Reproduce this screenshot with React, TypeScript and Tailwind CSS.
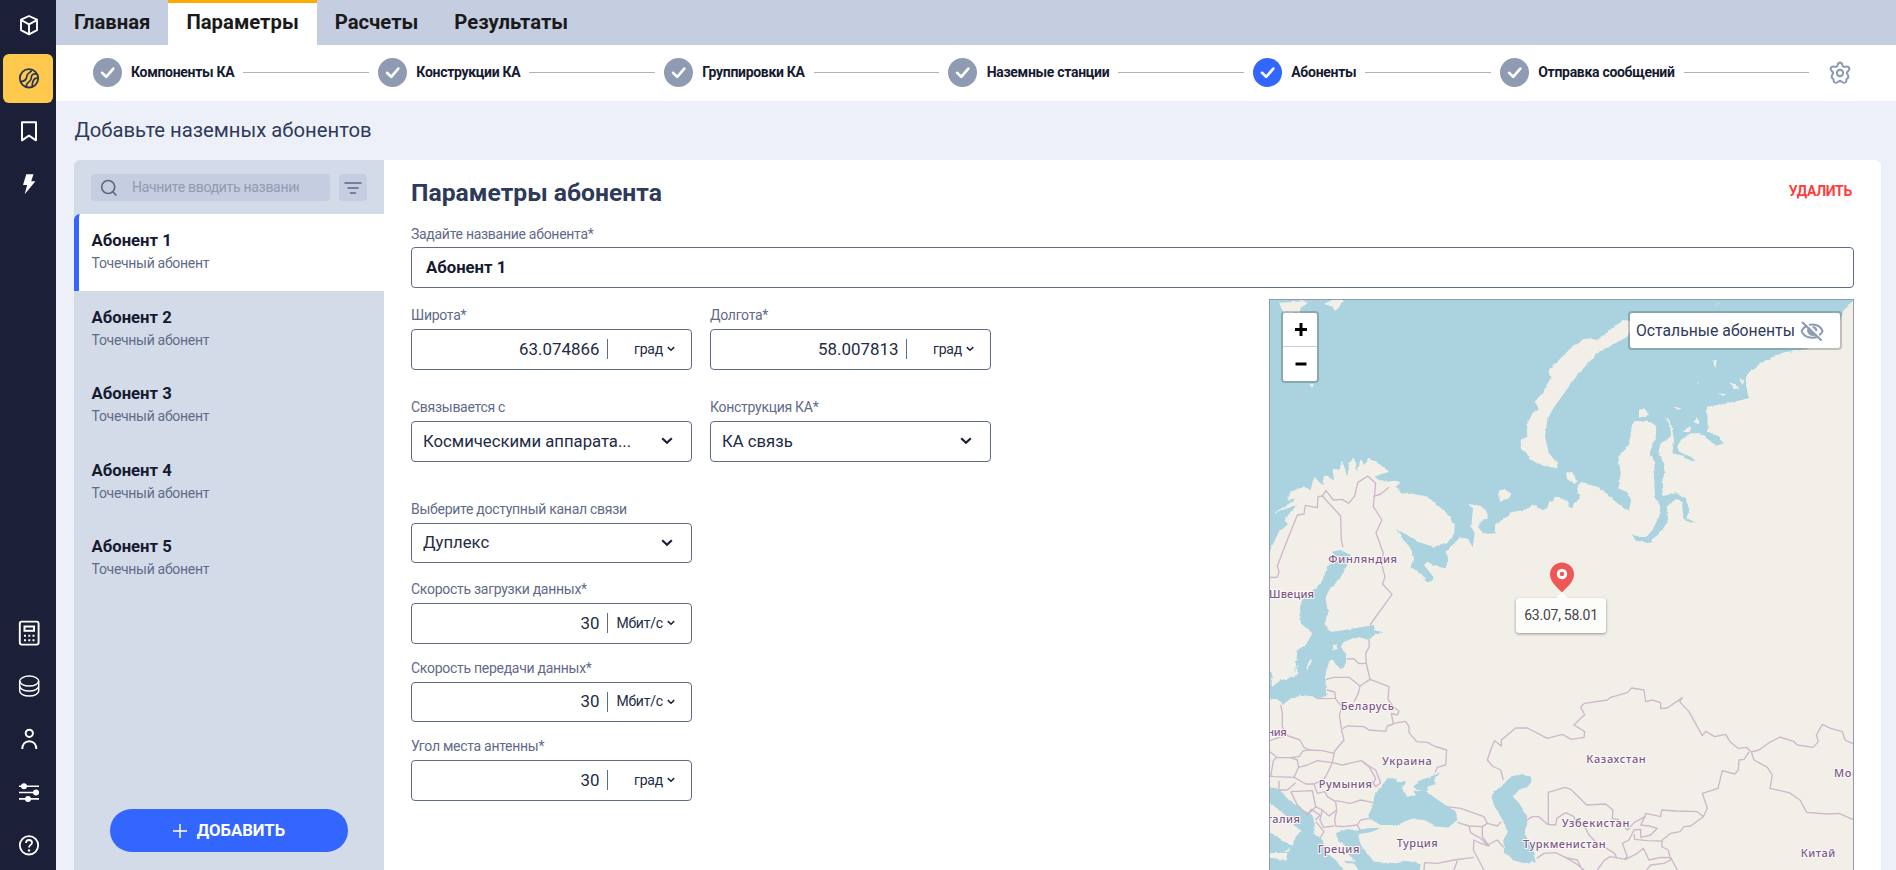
import React from "react";

type IconProps = { children: React.ReactNode; className?: string };

function NavIcon({ children, className = "text-white" }: IconProps) {
  return (
    <svg viewBox="-1 0.7 30 30" className={"h-[30px] w-[30px] " + className} fill="none" stroke="currentColor" strokeWidth="1.8">
      {children}
    </svg>
  );
}

function NavButton({ active, children }: { active?: boolean; children: React.ReactNode }) {
  return (
    <button
      className={
        active
          ? "flex h-[49px] w-[50px] items-center justify-center rounded-md bg-[#ffc94d]"
          : "flex h-[49px] w-[50px] items-center justify-center"
      }
    >
      <NavIcon className={active ? "text-[#2b3654]" : "text-white"}>{children}</NavIcon>
    </button>
  );
}

function Sidebar() {
  return (
    <nav className="flex h-full w-14 shrink-0 flex-col items-center justify-between bg-[#1b1f38] pt-px">
      <div className="flex flex-col gap-1">
        <NavButton>
          <path d="M15 5.7 23 9.400v10.400l-8 4.200-8-4.200V9.400zM7.300 9.800 15 14l7.700-4.200M15 14v9.600" strokeWidth="1.9" strokeLinejoin="round" />
        </NavButton>
        <NavButton active>
          <circle cx="15" cy="15" r="9.200" />
          <path d="M17.700 6.200c0 3.200-4.400 3-4.700 6.200-.3 3.700-2.700 6.100-6.900 5.900M12 23.700c.3-3 1.500-4.300 3.500-5.600 2.500-1.700 1.300-4.300 2.300-5.900.9-1.400 2.900-2 4.700-1.400M18.300 23.400c-.5-2.400.2-3.900.9-5.800.7-2 2.400-3 4.600-2.800" strokeWidth="1.700" />
        </NavButton>
        <NavButton>
          <path d="M8 6h14v18l-7-4.600-7 4.600z" strokeWidth="2" strokeLinejoin="round" />
        </NavButton>
        <NavButton>
          <path d="M12.300 5h7.200l-2.300 7h4.200L10.700 25l2.400-9.200H9z" fill="currentColor" stroke="none" />
        </NavButton>
      </div>
      <div className="flex flex-col gap-1">
        <NavButton>
          <rect x="5.800" y="3.300" width="18.800" height="23" rx="2" strokeWidth="1.900" />
          <rect x="10.500" y="8.200" width="9.500" height="4.300" strokeWidth="2" />
          <path d="M10 17.500h2m2.300 0h2m2.200 0h2M10 22h2m2.300 0h2m2.200 0h2" strokeWidth="2" />
        </NavButton>
        <NavButton>
          <ellipse cx="15.200" cy="9.800" rx="9.500" ry="5" strokeWidth="1.500" />
          <path d="M5.700 9.800v10c0 2.800 4.300 5 9.500 5s9.500-2.200 9.500-5v-10M5.700 14.800c0 2.800 4.300 5 9.500 5s9.500-2.200 9.500-5" strokeWidth="1.500" />
        </NavButton>
        <NavButton>
          <circle cx="15.300" cy="9" r="3.600" strokeWidth="2" />
          <path d="M8.300 24.800c0-4.500 2.700-7.800 7-7.800s7 3.300 7 7.800" strokeWidth="2" />
        </NavButton>
        <NavButton>
          <path d="M5 9h20M5 15.200h20M5 21.600h20" strokeWidth="1.600" />
          <g fill="currentColor" stroke="none">
            <circle cx="10" cy="9" r="3" />
            <circle cx="22" cy="15.200" r="3" />
            <circle cx="14" cy="21.600" r="3" />
          </g>
        </NavButton>
        <NavButton>
          <circle cx="15" cy="15" r="9.200" />
          <path d="M12 12.600c0-1.800 1.300-2.900 3-2.900s3 1.100 3 2.700c0 2.200-3 2.200-3 4.900" />
          <circle cx="15" cy="20.200" r="1.200" fill="currentColor" stroke="none" />
        </NavButton>
      </div>
    </nav>
  );
}

const tabs = ["Главная", "Параметры", "Расчеты", "Результаты"];

function Tabs() {
  return (
    <div className="flex h-[45px] shrink-0 bg-[#c5cde0]">
      {tabs.map((t) => (
        <button
          key={t}
          className={
            t === "Параметры"
              ? "border-t-[3px] border-[#ffaa00] bg-white px-[18px] pb-1 text-[20.300px] leading-[36px] font-bold text-[#1a1a1a]"
              : "border-t-[3px] border-transparent px-[18px] pb-1 text-[20.300px] leading-[36px] font-bold text-[#1a1a1a]"
          }
        >
          {t}
        </button>
      ))}
    </div>
  );
}

const steps = ["Компоненты КА", "Конструкции КА", "Группировки КА", "Наземные станции", "Абоненты", "Отправка сообщений"];

function Stepper() {
  return (
    <div className="flex h-14 shrink-0 items-center bg-white pr-[43px] pl-[36.500px]">
      <div className="flex flex-1 items-center gap-[9px] pb-px">
        {steps.map((s) => (
          <React.Fragment key={s}>
            <div className="flex items-center gap-[9.500px]">
              <svg viewBox="0 0 32 32" className="h-[29px] w-[29px]">
                <circle cx="16" cy="16" r="16" fill={s === "Абоненты" ? "#3366ff" : "#8f9bb3"} />
                <path d="m10 16.300 4.600 4.600 7.800-9.200" fill="none" stroke="#fff" strokeWidth="2.900" strokeLinecap="round" strokeLinejoin="round" />
              </svg>
              <span className="text-[14px] font-bold tracking-[-0.3px] whitespace-nowrap text-[#151a30]">{s}</span>
            </div>
            <div className="h-px flex-1 bg-[#b3b3b3]" />
          </React.Fragment>
        ))}
      </div>
      <svg viewBox="0 0 24 24" className="ml-[18px] h-[26px] w-[26px]" fill="none" stroke="#8f9bb3" strokeWidth="1.900" strokeLinejoin="round">
        <circle cx="12" cy="12" r="2.900" />
        <path d="M9.700 5c.3-1.600 1-2.600 2.300-2.600s2 1 2.300 2.600c.2 1 1.100 1.600 2.100 1.300 1.600-.5 3.300-.5 4 .9.600 1.300 0 2.300-1.200 3.300-.9.700-1 1.700-.4 2.600 1 1.400 1.200 2.800.3 3.700-.500.500-.8.600-1.100 1-.3.600.1 1.500-.4 2.300-.8 1.200-2.300 1.200-3.400.4l-1-.8c-.7-.5-1.700-.5-2.400 0l-1 .8c-1.100.8-2.600.8-3.400-.4-.5-.8-.1-1.700-.4-2.300-.3-.4-.6-.5-1.100-1-.9-.9-.7-2.300.3-3.700.6-.9.500-1.900-.4-2.600-1.200-1-1.800-2-1.200-3.300.7-1.400 2.400-1.400 4-.9 1 .3 1.900-.3 2.100-1.300z" />
      </svg>
    </div>
  );
}

function SubscriberList() {
  return (
    <aside className="flex w-[310px] shrink-0 flex-col rounded-tl-md bg-[#d4dbe8]">
      <div className="flex h-[54px] shrink-0 gap-[9px] pt-[14px] pl-[17px]">
        <div className="flex h-[27px] w-[239px] items-center rounded-[4px] bg-[#c5cde0] pl-[9px]">
          <svg viewBox="0 0 18 18" className="h-[18px] w-[18px] shrink-0" fill="none" stroke="#5a6785" strokeWidth="1.600">
            <circle cx="8.200" cy="8" r="6.500" />
            <path d="m12.800 12.800 3.700 3.700" />
          </svg>
          <span className="ml-[14px] w-[167px] overflow-hidden text-[14px] tracking-[-0.3px] whitespace-nowrap text-[#8f9bb3]">
            Начните вводить название
          </span>
        </div>
        <button className="flex h-[27px] w-7 items-center justify-center rounded-[4px] bg-[#c5cde0]">
          <svg viewBox="0 0 18 14" className="h-[14px] w-[18px]" stroke="#5a6785" strokeWidth="1.500" strokeLinecap="round">
            <path d="M1 2h16M4 7h10M6.500 12h5" />
          </svg>
        </button>
      </div>
      {[1, 2, 3, 4, 5].map((n) => (
        <div
          key={n}
          className={
            n === 1
              ? "h-[76.500px] shrink-0 rounded-tl-md border-l-[5px] border-[#3366ff] bg-white pt-4 pl-[12.500px]"
              : "h-[76.500px] shrink-0 pt-4 pl-[17.500px]"
          }
        >
          <div className="text-[16.700px] leading-[22px] font-bold text-[#151a30]">Абонент {n}</div>
          <div className="mt-px text-[14px] leading-[20px] tracking-[-0.3px] text-[#5f6b88]">Точечный абонент</div>
        </div>
      ))}
      <button className="mt-auto mb-[18px] ml-9 flex h-[43px] w-[238px] items-center justify-center gap-[10px] rounded-full bg-[#3366ff] text-[16.700px] font-bold text-white">
        <svg viewBox="0 0 14 14" className="h-[14px] w-[14px]" stroke="#fff" strokeWidth="1.500">
          <path d="M7 0v14M0 7h14" />
        </svg>
        ДОБАВИТЬ
      </button>
    </aside>
  );
}

function Label({ children }: { children: React.ReactNode }) {
  return <div className="h-[20px] text-[14px] leading-[22px] tracking-[-0.28px] whitespace-nowrap text-[#5f6b88]">{children}</div>;
}

function Chevron({ big }: { big?: boolean }) {
  return (
    <svg viewBox="0 0 12 8" className={big ? "h-2 w-3" : "h-[6px] w-[8px]"} fill="none" stroke="#1b2138" strokeWidth="2.200">
      <path d="m1.200 1.200 4.800 4.600 4.800-4.600" />
    </svg>
  );
}

function NumberField({ label, value, unit }: { label: string; value: string; unit: string }) {
  return (
    <div className="w-[281px]">
      <Label>{label}</Label>
      <div className="mt-[5px] flex h-[40.500px] items-center rounded-[4px] border border-[#5f6b88] pr-4">
        <span className="flex-1 text-right text-[16.900px] text-[#222b45]">{value}</span>
        <span className="ml-[7px] h-5 w-px bg-[#5f6b88]" />
        <span className="flex w-[67.500px] items-center justify-end gap-1 text-[14px] tracking-[-0.2px] text-[#222b45]">
          {unit}
          <Chevron />
        </span>
      </div>
    </div>
  );
}

function SelectField({ label, value }: { label: string; value: string }) {
  return (
    <div className="w-[281px]">
      <Label>{label}</Label>
      <div className="mt-[5px] flex h-[40.500px] items-center justify-between rounded-[4px] border border-[#5f6b88] pr-[18px] pl-[11px]">
        <span className="text-[16.700px] whitespace-nowrap text-[#222b45]">{value}</span>
        <Chevron big />
      </div>
    </div>
  );
}

const sea = [
  // Arctic ocean with the White, Barents and Kara seas
  "M0 0H1790V10L1767 32 1740 60 1733 70 1722 125 1690 150 1650 172 1600 182 1560 187 1520 205 1490 220 1465 240 1450 250 1445 270 1453 325 1420 333 1380 342 1328 350 1330 380 1332 425 1360 437 1380 462 1355 467 1335 450 1310 430 1280 430 1250 450 1240 470 1245 485 1280 500 1295 513 1280 512 1260 498 1225 490 1230 450 1225 420 1220 395 1206 380 1215 400 1219 440 1190 460 1183 487 1200 520 1202 545 1193 575 1197 618 1235 610 1265 625 1276 660 1267 685 1295 697 1270 697 1258 685 1254 635 1240 628 1220 637 1207 655 1213 690 1198 715 1165 750 1165 760 1115 752 1103 732 1125 742 1150 738 1165 720 1185 680 1190 650 1173 625 1170 560 1172 515 1158 485 1175 440 1177 408 1160 397 1122 393 1105 400 1095 460 1063 500 1070 550 1063 595 1085 605 1103 630 1092 662 1060 640 1030 612 1000 590 950 578 938 590 948 625 930 640 925 655 913 650 915 635 890 625 870 622 868 634 855 635 850 655 835 660 810 645 780 660 745 665 715 690 697 700 695 730 660 732 641 710 650 690 675 685 665 660 650 648 612 642 627 655 622 710 632 730 626 772 612 748 590 740 570 760 545 785 553 805 545 835 520 830 490 815 480 825 508 860 505 875 485 872 470 850 440 830 450 800 440 775 415 745 397 718 430 735 460 755 510 770 545 762 570 735 572 705 560 680 520 645 490 620 430 608 418 612 395 590 410 578 395 572 365 575 330 560 375 545 350 525 315 505 300 525 290 508 280 545 270 503 255 520 250 560 235 512 225 540 205 535 210 570 180 555 175 585 150 560 140 600 120 590 80 605 70 630 100 625 60 650 30 668 100 645 80 665 62 690 72 703 45 725 28 760 15 790 0 800Z",
  // Gulf of Bothnia and the Baltic
  "M205 785 230 780 260 795 247 830 225 870 195 900 185 925 192 970 180 1005 205 1025 240 1020 300 1010 328 1005 335 1020 357 1028 330 1035 315 1050 280 1040 240 1055 230 1070 245 1090 247 1120 235 1138 220 1132 205 1105 195 1115 185 1150 185 1200 188 1218 160 1227 135 1215 85 1222 55 1245 40 1228 10 1225V1140L25 1190 50 1170 92 1162 100 1080 125 1065 145 1030 110 1000 108 950 120 920 160 890 180 865 190 830 215 805Z",
  // Black Sea and the Sea of Azov
  "M313 1575 325 1550 332 1515 370 1465 395 1465 400 1477 428 1475 413 1492 430 1520 455 1515 447 1505 480 1500 530 1535 575 1565 580 1590 555 1612 520 1610 480 1590 440 1587 400 1605 350 1605 315 1585Z",
  "M447 1490 470 1470 500 1460 530 1447 510 1470 515 1482 490 1490 492 1503 460 1500Z",
  // Caspian Sea
  "M740 1460 770 1453 800 1460 803 1475 790 1490 765 1500 745 1520 762 1535 785 1570 790 1600 780 1630 800 1660 815 1715 780 1720 745 1710 720 1685 718 1650 732 1625 710 1580 692 1550 682 1520 690 1505 712 1490Z",
  // Adriatic, Ionian and Aegean seas
  "M0 1490 40 1495 80 1535 145 1575 152 1605 150 1630 175 1650 190 1690 215 1710 230 1730 250 1728 240 1712 275 1715 250 1690 270 1690 245 1668 225 1655 215 1630 250 1617 280 1622 310 1615 350 1613 320 1627 282 1632 290 1665 310 1690 330 1715 400 1720 420 1712 470 1720 465 1760H0Z",
  "M20 1145 26 1160 20 1190 10 1160Z",
];

const islands = [
  "M960 148 945 160 930 165 890 205 865 230 852 240 860 265 835 310 812 335 825 355 805 370 788 405 790 440 770 450 770 475 785 485 800 510 840 528 880 535 880 520 855 490 843 440 850 390 865 360 900 310 940 255 1000 190 1045 165 1090 140 1105 110 1095 92 1075 90 1050 110 1000 150 975 145Z",
  "M705 602 722 597 742 612 735 625 708 635Z",
  "M905 545 925 550 942 575 932 583 910 568Z",
  "M1125 360 1140 355 1155 374 1125 384Z",
  "M45 38 130 33 128 42 112 52 105 68 58 68Z",
  "M180 42 205 30 240 30 215 65 205 50Z",
  "M1256 425 1272 412 1284 415 1275 427Z",
  "M1288 395 1298 382 1306 404Z",
  "M1346 212 1358 208 1355 235 1346 222Z",
  "M1228 352 1250 354 1240 360Z",
  "M1400 278 1420 285 1425 300 1405 292Z",
  "M1425 262 1440 270 1436 290Z",
  "M1360 310 1385 312 1382 318Z",
  "M1358 41h6v5h-6zM1300 275h6v5h-6zM140 282h8v9h-8z",
  "M128 1130 140 1105 145 1108 132 1142Z",
  "M92 1155 100 1125 103 1128 98 1158Z",
  "M0 1520 20 1540 45 1560 75 1585 110 1625 95 1640 90 1660 72 1685 60 1685 85 1668 60 1655 30 1632 0 1625Z",
  "M0 1690 70 1688 66 1712 30 1705 0 1700Z",
  "M205 1065 220 1062 222 1075 205 1085Z",
  "M230 1720h40l20 30h-50z",
];

const borders = [
  "M0 863 40 862 45 845 40 828 70 750 100 675 120 672 124 646 160 653 162 620 175 618 186 602 208 630 235 628 254 640 272 618 281 578 311 558 335 580 328 650 354 690 336 728 358 790 352 820 363 860 356 882 384 913 318 1005",
  "M175 618 230 678 232 750 237 772",
  "M328 620 350 612 375 592",
  "M315 1050 316 1070 305 1090 307 1120 318 1168 288 1188 283 1210 270 1235",
  "M248 1107 270 1106 285 1121 307 1120",
  "M186 1168 210 1162 255 1162 288 1188",
  "M188 1200 212 1206 215 1225 160 1226M215 1228 234 1250 226 1275 232 1315",
  "M232 1318 250 1308 300 1310 315 1320 365 1324 370 1308 388 1302 382 1270 400 1275 405 1263 388 1250 372 1228 375 1190 318 1168",
  "M388 1300 425 1294 435 1310 435 1328 458 1355 490 1357 510 1368 548 1380 545 1425 520 1432 513 1448",
  "M232 1318 240 1350 212 1383 205 1418 235 1425 265 1418 292 1412 310 1425 335 1440 350 1478 335 1490 325 1475",
  "M292 1412 315 1430 335 1465 328 1480M205 1418 185 1460 168 1478",
  "M50 1245 55 1270 55 1310 65 1335 108 1350 120 1372 138 1380 175 1382 210 1390",
  "M18 1352 65 1335M18 1385 38 1402 80 1403 105 1400 118 1382 138 1380M38 1402 28 1412 20 1460",
  "M80 1403 100 1410 104 1432 130 1425 160 1412 205 1418M104 1432 90 1462 30 1460 18 1458M90 1462 125 1482 150 1482 165 1475",
  "M45 1472 45 1500 70 1500 95 1478M80 1505 145 1502 155 1550 130 1575 100 1545 80 1505",
  "M150 1482 160 1510 182 1505 190 1520 215 1535 218 1560 195 1578 175 1560 155 1550",
  "M215 1532 260 1540 290 1530 328 1538M218 1560 212 1590 215 1608 240 1610 280 1605 290 1590 315 1585",
  "M130 1575 142 1558 168 1575 155 1590M175 1560 168 1590 178 1612 210 1608M155 1595 180 1625 168 1645M280 1605 288 1620",
  "M545 1550 590 1555 660 1580 670 1600 700 1608 712 1595M580 1597 615 1608 655 1610 670 1600",
  "M615 1608 620 1628 650 1645 670 1665 700 1650 718 1672M655 1610 655 1640 675 1668 650 1660 630 1650 628 1680 660 1740",
  "M480 1740 482 1718 520 1720 570 1710 630 1702M570 1740 580 1712",
  "M718 1470 710 1440 685 1428 670 1410 682 1375 692 1352 712 1368 712 1350 755 1314 790 1314 850 1345 895 1333 922 1348 960 1342 962 1325 930 1305 950 1285 962 1275 950 1250 962 1240 1030 1230 1040 1222 1090 1208 1103 1194 1140 1200 1145 1235 1165 1230 1190 1238 1190 1256 1210 1254 1255 1223 1247 1235 1275 1265 1315 1337 1325 1324 1352 1340 1385 1333 1398 1355 1422 1375 1447 1372 1462 1386 1485 1380 1515 1358 1548 1341 1590 1355 1600 1365 1647 1372 1663 1355 1657 1335 1675 1303 1700 1315 1735 1325 1743 1350 1770 1363",
  "M1455 1386 1440 1408 1425 1410 1423 1440 1412 1452 1375 1442 1362 1495 1315 1510 1330 1555 1318 1580 1280 1608 1260 1610 1248 1625 1220 1630 1195 1650 1193 1670 1213 1680 1220 1710 1200 1720 1160 1725 1148 1740",
  "M1462 1386 1470 1410 1510 1432 1525 1455 1518 1495 1575 1508 1608 1530 1628 1567 1690 1572 1725 1570 1770 1590",
  "M853 1605V1507L903 1492 920 1498 968 1545 1025 1542 1047 1560 1045 1585 1065 1590M785 1592 805 1580 825 1580 850 1603 875 1605 878 1585 905 1568 930 1580 935 1598 962 1610 975 1635 995 1655 1052 1690 1058 1705",
  "M1065 1590 1090 1620 1110 1598 1143 1580 1145 1570 1190 1580 1193 1560 1235 1563 1300 1565 1318 1580",
  "M1143 1580 1130 1605 1155 1608 1180 1615 1160 1635 1130 1642 1130 1618 1110 1620 1095 1650 1075 1660 1090 1700 1080 1708M1110 1632 1112 1648 1150 1652 1193 1653",
  "M818 1705 840 1690 875 1688 905 1703 940 1710 955 1740M900 1700 935 1720 960 1740M1000 1740 1020 1712 1038 1700 1085 1708 1120 1690 1138 1675 1155 1710 1190 1702 1220 1703 1240 1740",
];

const places: [string, number, number, number][] = [
  ["Финляндия", 193, 818, 206],
  ["Швеция", 15, 923, 135],
  ["Беларусь", 230, 1260, 160],
  ["ния", 10, 1337, 58],
  ["Украина", 354, 1424, 149],
  ["Румыния", 164, 1493, 160],
  ["талия", 8, 1598, 100],
  ["Греция", 161, 1690, 125],
  ["Турция", 398, 1672, 123],
  ["Узбекистан", 893, 1611, 203],
  ["Туркменистан", 777, 1674, 248],
  ["Казахстан", 967, 1419, 178],
  ["Китай", 1610, 1702, 104],
  ["Монголия", 1710, 1460, 178],
];

function MapPanel() {
  return (
    <div className="relative h-[571px] w-[585px] shrink-0 overflow-hidden border border-b-0 border-[#8f9bb3] bg-[#f2efe9]">
      <svg viewBox="18 30 1749 1710" className="h-[570px] w-[583px]" preserveAspectRatio="none">
        <defs>
          <filter id="coast" filterUnits="userSpaceOnUse" x="0" y="0" width="1800" height="1760">
            <feTurbulence type="fractalNoise" baseFrequency="0.07" numOctaves="2" seed="4" />
            <feDisplacementMap in="SourceGraphic" scale="9" xChannelSelector="R" yChannelSelector="G" />
          </filter>
        </defs>
        <rect width="1800" height="1760" fill="#f2efe9" />
        <g filter="url(#coast)">
          {sea.map((d) => (
            <path key={d} d={d} fill="#aad3df" />
          ))}
          {islands.map((d) => (
            <path key={d} d={d} fill="#f2efe9" />
          ))}
        </g>
        <g fill="none" stroke="#cdb8cb" strokeWidth="4" strokeLinejoin="round">
          {borders.map((d) => (
            <path key={d} d={d} />
          ))}
        </g>
        <g
          fontFamily="Noto Sans"
          fontSize="33"
          fontWeight="500"
          fill="#7d5a86"
          stroke="#fbf8f8"
          strokeWidth="6"
          strokeLinejoin="round"
          paintOrder="stroke"
        >
          {places.map(([name, x, y, w]) => (
            <text key={name} x={x} y={y} textLength={w}>
              {name}
            </text>
          ))}
        </g>
      </svg>
      <div className="absolute top-[11px] left-[11px] flex w-[38px] flex-col rounded-[4px] border-2 border-black/20 bg-clip-padding">
        <button className="flex h-[34px] items-center justify-center rounded-t-[2px] border-b border-[#ccc] bg-white pl-px">
          <svg viewBox="0 0 12 13" className="h-[13px] w-3" stroke="#000" strokeWidth="3">
            <path d="M6 0v13M0 6.500h12" />
          </svg>
        </button>
        <button className="flex h-[34px] items-center justify-center rounded-b-[2px] bg-white pl-px">
          <svg viewBox="0 0 12 13" className="h-[13px] w-3" stroke="#000" strokeWidth="3">
            <path d="M0.500 6h11" />
          </svg>
        </button>
      </div>
      <div className="absolute top-[11px] right-[11px] flex h-[39px] w-[214px] items-center gap-[5px] rounded-[4px] border-2 border-black/20 bg-white bg-clip-padding pl-[6px] text-[15.750px] whitespace-nowrap text-[#2e3a59]">
        Остальные абоненты
        <svg viewBox="0 0 24 20" className="h-5 w-6" fill="none" stroke="#8f9bb3" strokeWidth="2">
          <path d="M6.500 5.200C3.800 6.500 2 9 1.600 10.200c1.500 3.800 5.400 6.600 10.600 6.600 1.700 0 3.200-.3 4.500-.8M9 3.900c1-.3 2-.4 3.200-.4 5.400 0 9 3 10.300 6.700-.6 1.600-1.700 3-3.200 4.100" />
          <path d="M8.600 7.500a4.500 4.500 0 0 0 6 6z" fill="#8f9bb3" />
          <path d="M12.500 6.200a4 4 0 0 1 3.800 3.900M2 1l19.500 18.500" strokeWidth="2.200" />
        </svg>
      </div>
      <svg viewBox="0 0 24 30" className="absolute top-[262px] left-[280px] h-[31px] w-[24px]">
        <path d="M12 0a12 12 0 0 0-12 12c0 7.500 7.500 13 12 18 4.500-5 12-10.500 12-18A12 12 0 0 0 12 0z" fill="#ef5757" />
        <circle cx="12" cy="11.500" r="3.700" fill="none" stroke="#fff" strokeWidth="3" />
      </svg>
      <div className="absolute top-[298px] left-[246px] flex h-[35px] w-[90px] items-center justify-center rounded-[3px] bg-[#fcfcfa] text-[14px] tracking-[-0.25px] text-[#444] shadow-[0_1px_3px_rgba(0,0,0,0.4)]">
        63.07, 58.01
        <span className="absolute -top-[6px] left-[40px] h-0 w-0 border-x-[6px] border-b-[6px] border-x-transparent border-b-[#fcfcfa]" />
      </div>
    </div>
  );
}

function SubscriberForm() {
  return (
    <section className="flex flex-1 flex-col rounded-tr-md bg-white pr-[27px] pl-[27px]">
      <div className="flex h-[63px] shrink-0 items-center justify-between">
        <h2 className="pt-0.5 text-[24.700px] font-bold text-[#2e3a59]">Параметры абонента</h2>
        <button className="pr-0.5 text-[14px] font-bold tracking-[-0.3px] text-[#ff3d3d]">УДАЛИТЬ</button>
      </div>
      <Label>Задайте название абонента*</Label>
      <div className="mt-1 flex h-[41px] shrink-0 items-center rounded-[4px] border border-[#5f6b88] pt-px pl-[14px] text-[16.700px] font-bold text-[#151a30]">
        Абонент 1
      </div>
      <div className="mt-[11px] flex justify-between">
        <div className="flex flex-col pt-[5px]">
          <div className="flex gap-[18px]">
            <NumberField label="Широта*" value="63.074866" unit="град" />
            <NumberField label="Долгота*" value="58.007813" unit="град" />
          </div>
          <div className="mt-[26.500px] flex gap-[18px]">
            <SelectField label="Связывается с" value="Космическими аппарата..." />
            <SelectField label="Конструкция КА*" value="КА связь" />
          </div>
          <div className="mt-9 flex flex-col gap-[13px]">
            <div className="pb-[2px]">
              <SelectField label="Выберите доступный канал связи" value="Дуплекс" />
            </div>
            <NumberField label="Скорость загрузки данных*" value="30" unit="Мбит/с" />
            <NumberField label="Скорость передачи данных*" value="30" unit="Мбит/с" />
            <NumberField label="Угол места антенны*" value="30" unit="град" />
          </div>
        </div>
        <MapPanel />
      </div>
    </section>
  );
}

export default function App() {
  return (
    <div className="flex h-[870px] w-full overflow-hidden bg-[#edf0f8] font-['Roboto',sans-serif]">
      <Sidebar />
      <div className="flex min-w-0 flex-1 flex-col">
        <Tabs />
        <Stepper />
        <h1 className="flex h-[59px] shrink-0 items-center pl-[18.500px] text-[20.250px] text-[#2e3a59]">Добавьте наземных абонентов</h1>
        <main className="mr-[15px] ml-[18px] flex min-h-0 flex-1">
          <SubscriberList />
          <SubscriberForm />
        </main>
      </div>
    </div>
  );
}
